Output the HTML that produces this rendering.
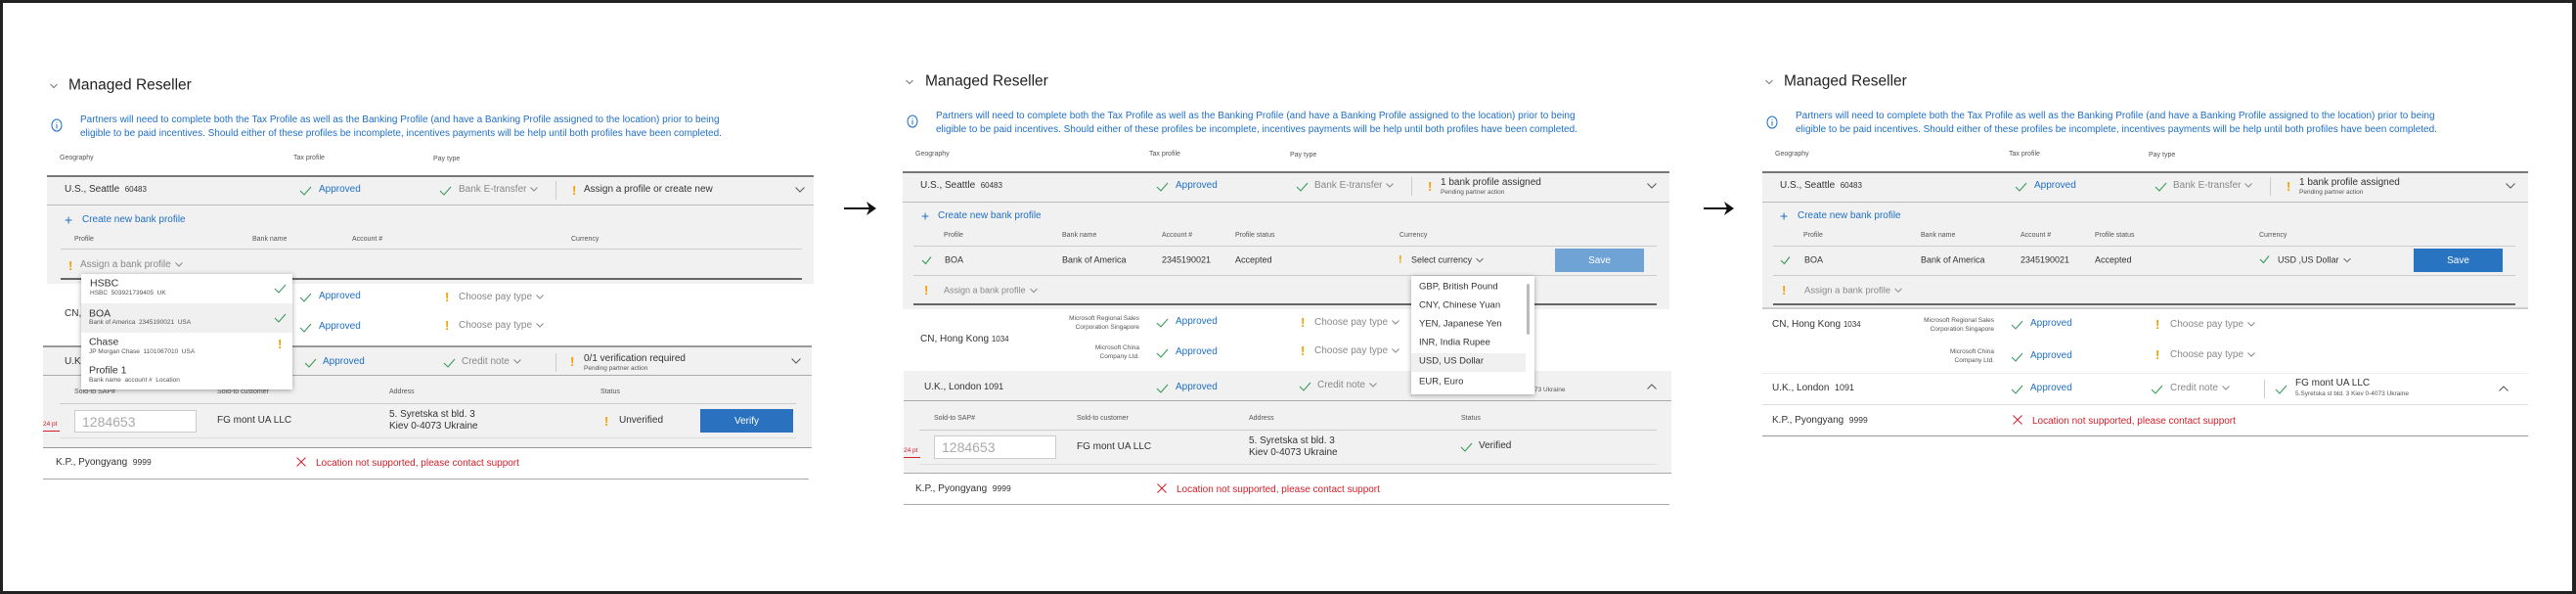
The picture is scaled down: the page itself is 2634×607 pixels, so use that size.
<!DOCTYPE html>
<html><head><meta charset="utf-8">
<style>
*{margin:0;padding:0;box-sizing:border-box}
html,body{width:2634px;height:607px;overflow:hidden;background:#fff}
body{position:relative;font-family:"Liberation Sans",Arial,sans-serif;color:#333}
.frame{position:absolute;left:0;top:0;width:2634px;height:607px;border:3px solid #222;border-right-width:4px}
.p{position:absolute;top:0;height:607px;width:880px}
.t{position:absolute;white-space:nowrap;transform:translateY(-50%);font-size:10px;line-height:1.2;color:#333}
.h{font-size:7px;color:#555}
.s{font-size:6.5px;color:#555}
.b{color:#1f6fc5}
.g{color:#888}
.r{color:#d0202a}
.o{color:#f5a000;font-size:13px;font-weight:bold}
.ti{font-size:15.5px;color:#222}
.info{position:absolute;font-size:10px;line-height:13.5px;color:#1f6fc5;white-space:nowrap}
.bg{position:absolute;background:#f1f1f1}
.ln{position:absolute;height:1px;background:#ccc}
.dk{position:absolute;height:2px;background:#666}
.sep{position:absolute;width:1px;background:#ccc}
.ck{position:absolute;transform:translateY(-50%)}
.cv{display:inline-block;margin-left:4px;vertical-align:middle}
.btn{position:absolute;color:#fff;font-size:10px;display:flex;align-items:center;justify-content:center}
.inp{position:absolute;background:#fff;border:1px solid #ccc;font-size:14px;color:#aaa;padding-left:7px;display:flex;align-items:center}
.dd{position:absolute;background:#fff;box-shadow:0 1px 5px rgba(0,0,0,.35)}
.arrow{position:absolute;height:2px;background:#111}
</style></head><body>
<div class="frame"></div>

<div class="arrow" style="left:863px;top:212px;width:28px"></div>
<svg style="position:absolute;left:886px;top:206px" width="10" height="14"><path d="M0 0L10 7L0 14L3 7Z" fill="#111"/></svg>
<div class="arrow" style="left:1742px;top:212px;width:26px"></div>
<svg style="position:absolute;left:1763px;top:206px" width="10" height="14"><path d="M0 0L10 7L0 14L3 7Z" fill="#111"/></svg>

<!-- ================= PANEL 1 ================= -->
<div class="p" style="left:0">
<svg class="ck" style="left:51px;top:88px" width="8" height="5"><path d="M0.5 0.5L4 4L7.5 0.5" fill="none" stroke="#777"/></svg>
<div class="t ti" style="left:70px;top:88px">Managed Reseller</div>
<svg class="ck" style="left:52px;top:128px" width="12" height="14"><ellipse cx="6" cy="7" rx="5" ry="6" fill="none" stroke="#1f6fc5"/><path d="M6 6v4.5M6 3.8v1" stroke="#1f6fc5"/></svg>
<div class="info" style="left:82px;top:116px">Partners will need to complete both the Tax Profile as well as the Banking Profile (and have a Banking Profile assigned to the location) prior to being<br>eligible to be paid incentives. Should either of these profiles be incomplete, incentives payments will be help until both profiles have been completed.</div>
<div class="t h" style="left:61px;top:162px">Geography</div>
<div class="t h" style="left:300px;top:162px">Tax profile</div>
<div class="t h" style="left:443px;top:163px">Pay type</div>

<div class="bg" style="left:48px;top:179px;width:784px;height:111px;border-top:2px solid #777"></div>
<div class="ln" style="left:48px;top:209px;width:784px;background:#bbb"></div>
<div class="t" style="left:66px;top:194px">U.S., Seattle &nbsp;<span style="font-size:8px">60483</span></div>
<svg class="ck" style="left:306px;top:195px" width="13" height="10"><path d="M1 5L5 9L12 1" fill="none" stroke="#3a9a5b" stroke-width="1.1"/></svg>
<div class="t b" style="left:326px;top:194px">Approved</div>
<svg class="ck" style="left:449px;top:195px" width="13" height="10"><path d="M1 5L5 9L12 1" fill="none" stroke="#3a9a5b" stroke-width="1.1"/></svg>
<div class="t g" style="left:469px;top:194px">Bank E-transfer<svg class="cv" width="8" height="5"><path d="M0.5 0.5L4 4L7.5 0.5" fill="none" stroke="#888"/></svg></div>
<div class="sep" style="left:568px;top:185px;height:19px"></div>
<div class="t o" style="left:585px;top:195px">!</div>
<div class="t" style="left:597px;top:194px">Assign a profile or create new</div>
<svg class="ck" style="left:813px;top:194px" width="10" height="6"><path d="M0.5 0.5L5 5L9.5 0.5" fill="none" stroke="#555"/></svg>

<div class="t b" style="left:66px;top:225px;font-size:14px">+</div>
<div class="t b" style="left:84px;top:225px">Create new bank profile</div>
<div class="t h" style="left:76px;top:245px">Profile</div>
<div class="t h" style="left:258px;top:245px">Bank name</div>
<div class="t h" style="left:360px;top:245px">Account #</div>
<div class="t h" style="left:584px;top:245px">Currency</div>
<div class="ln" style="left:62px;top:254px;width:758px"></div>
<div class="t o" style="left:70px;top:272px">!</div>
<div class="t g" style="left:82px;top:271px">Assign a bank profile<svg class="cv" width="8" height="5"><path d="M0.5 0.5L4 4L7.5 0.5" fill="none" stroke="#888"/></svg></div>
<div class="dk" style="left:62px;top:284px;width:758px"></div>

<div class="t" style="left:66px;top:321px">CN,</div>
<svg class="ck" style="left:306px;top:304px" width="13" height="10"><path d="M1 5L5 9L12 1" fill="none" stroke="#3a9a5b" stroke-width="1.1"/></svg>
<div class="t b" style="left:326px;top:303px">Approved</div>
<svg class="ck" style="left:306px;top:335px" width="13" height="10"><path d="M1 5L5 9L12 1" fill="none" stroke="#3a9a5b" stroke-width="1.1"/></svg>
<div class="t b" style="left:326px;top:334px">Approved</div>
<div class="t o" style="left:455px;top:304px">!</div>
<div class="t g" style="left:469px;top:304px">Choose pay type<svg class="cv" width="8" height="5"><path d="M0.5 0.5L4 4L7.5 0.5" fill="none" stroke="#888"/></svg></div>
<div class="t o" style="left:455px;top:333px">!</div>
<div class="t g" style="left:469px;top:333px">Choose pay type<svg class="cv" width="8" height="5"><path d="M0.5 0.5L4 4L7.5 0.5" fill="none" stroke="#888"/></svg></div>

<div class="bg" style="left:44px;top:353px;width:786px;height:105px;border-top:2px solid #999;border-bottom:1px solid #999"></div>
<div class="ln" style="left:44px;top:383px;width:786px;background:#aaa"></div>
<div class="t" style="left:66px;top:370px">U.K.</div>
<svg class="ck" style="left:311px;top:371px" width="13" height="10"><path d="M1 5L5 9L12 1" fill="none" stroke="#3a9a5b" stroke-width="1.1"/></svg>
<div class="t b" style="left:330px;top:370px">Approved</div>
<svg class="ck" style="left:453px;top:371px" width="13" height="10"><path d="M1 5L5 9L12 1" fill="none" stroke="#3a9a5b" stroke-width="1.1"/></svg>
<div class="t g" style="left:472px;top:370px">Credit note<svg class="cv" width="8" height="5"><path d="M0.5 0.5L4 4L7.5 0.5" fill="none" stroke="#888"/></svg></div>
<div class="sep" style="left:568px;top:361px;height:19px"></div>
<div class="t o" style="left:583px;top:370px">!</div>
<div class="t" style="left:597px;top:367px">0/1 verification required</div>
<div class="t s" style="left:597px;top:377px">Pending partner action</div>
<svg class="ck" style="left:809px;top:369px" width="10" height="6"><path d="M0.5 0.5L5 5L9.5 0.5" fill="none" stroke="#555"/></svg>
<div class="t h" style="left:76px;top:401px">Sold-to SAP#</div>
<div class="t h" style="left:222px;top:401px">Sold-to customer</div>
<div class="t h" style="left:398px;top:401px">Address</div>
<div class="t h" style="left:614px;top:401px">Status</div>
<div class="ln" style="left:61px;top:412px;width:753px"></div>
<div class="inp" style="left:76px;top:419px;width:125px;height:23px">1284653</div>
<div class="t" style="left:222px;top:430px">FG mont UA LLC</div>
<div class="t" style="left:398px;top:424px">5. Syretska st bld. 3</div>
<div class="t" style="left:398px;top:436px">Kiev 0-4073 Ukraine</div>
<div class="t o" style="left:618px;top:431px">!</div>
<div class="t" style="left:633px;top:430px">Unverified</div>
<div class="btn" style="left:716px;top:418px;width:95px;height:24px;background:#2a72c0">Verify</div>
<div class="ln" style="left:61px;top:447px;width:753px;background:#ddd"></div>
<div class="t r" style="left:44px;top:434px;font-size:6.5px">24 pt</div>
<div class="ln" style="left:44px;top:440px;width:17px;background:#d0202a"></div>

<div class="t" style="left:57px;top:473px">K.P., Pyongyang &nbsp;<span style="font-size:8.5px">9999</span></div>
<svg class="ck" style="left:303px;top:472px" width="10" height="10"><path d="M0.5 0.5L9.5 9.5M9.5 0.5L0.5 9.5" stroke="#d0202a"/></svg>
<div class="t r" style="left:323px;top:474px">Location not supported, please contact support</div>
<div class="ln" style="left:44px;top:489px;width:783px;background:#aaa"></div>

<div class="dd" style="left:83px;top:280px;width:216px;height:118px">
 <div style="position:absolute;left:0;top:30px;width:216px;height:30px;background:#f0f0f0"></div>
</div>
<div class="t" style="left:92px;top:290px;font-size:10.5px">HSBC</div>
<div class="t s" style="left:92px;top:300px">HSBC &nbsp;503921739405 &nbsp;UK</div>
<svg class="ck" style="left:280px;top:295px" width="13" height="10"><path d="M1 5L5 9L12 1" fill="none" stroke="#3a9a5b" stroke-width="1.1"/></svg>
<div class="t" style="left:91px;top:321px;font-size:10.5px">BOA</div>
<div class="t s" style="left:91px;top:330px">Bank of America &nbsp;2345190021 &nbsp;USA</div>
<svg class="ck" style="left:280px;top:325px" width="13" height="10"><path d="M1 5L5 9L12 1" fill="none" stroke="#3a9a5b" stroke-width="1.1"/></svg>
<div class="t" style="left:91px;top:350px;font-size:10.5px">Chase</div>
<div class="t s" style="left:91px;top:360px">JP Morgan Chase &nbsp;1101067010 &nbsp;USA</div>
<div class="t o" style="left:284px;top:352px">!</div>
<div class="t" style="left:91px;top:379px;font-size:10.5px">Profile 1</div>
<div class="t s" style="left:91px;top:389px">Bank name &nbsp;account # &nbsp;Location</div>
</div>

<!-- ================= PANEL 2 ================= -->
<div class="p" style="left:880px">
<svg class="ck" style="left:46px;top:84px" width="8" height="5"><path d="M0.5 0.5L4 4L7.5 0.5" fill="none" stroke="#777"/></svg>
<div class="t ti" style="left:66px;top:84px">Managed Reseller</div>
<svg class="ck" style="left:47px;top:124px" width="12" height="14"><ellipse cx="6" cy="7" rx="5" ry="6" fill="none" stroke="#1f6fc5"/><path d="M6 6v4.5M6 3.8v1" stroke="#1f6fc5"/></svg>
<div class="info" style="left:77px;top:112px">Partners will need to complete both the Tax Profile as well as the Banking Profile (and have a Banking Profile assigned to the location) prior to being<br>eligible to be paid incentives. Should either of these profiles be incomplete, incentives payments will be help until both profiles have been completed.</div>
<div class="t h" style="left:56px;top:158px">Geography</div>
<div class="t h" style="left:295px;top:158px">Tax profile</div>
<div class="t h" style="left:439px;top:159px">Pay type</div>

<div class="bg" style="left:43px;top:175px;width:784px;height:141px;border-top:2px solid #777"></div>
<div class="ln" style="left:43px;top:206px;width:784px;background:#bbb"></div>
<div class="t" style="left:61px;top:190px">U.S., Seattle &nbsp;<span style="font-size:8px">60483</span></div>
<svg class="ck" style="left:302px;top:191px" width="13" height="10"><path d="M1 5L5 9L12 1" fill="none" stroke="#3a9a5b" stroke-width="1.1"/></svg>
<div class="t b" style="left:322px;top:190px">Approved</div>
<svg class="ck" style="left:445px;top:191px" width="13" height="10"><path d="M1 5L5 9L12 1" fill="none" stroke="#3a9a5b" stroke-width="1.1"/></svg>
<div class="t g" style="left:464px;top:190px">Bank E-transfer<svg class="cv" width="8" height="5"><path d="M0.5 0.5L4 4L7.5 0.5" fill="none" stroke="#888"/></svg></div>
<div class="sep" style="left:563px;top:181px;height:19px"></div>
<div class="t o" style="left:580px;top:191px">!</div>
<div class="t" style="left:593px;top:187px">1 bank profile assigned</div>
<div class="t s" style="left:593px;top:197px">Pending partner action</div>
<svg class="ck" style="left:804px;top:190px" width="10" height="6"><path d="M0.5 0.5L5 5L9.5 0.5" fill="none" stroke="#555"/></svg>

<div class="t b" style="left:62px;top:221px;font-size:14px">+</div>
<div class="t b" style="left:79px;top:221px">Create new bank profile</div>
<div class="t h" style="left:85px;top:241px">Profile</div>
<div class="t h" style="left:206px;top:241px">Bank name</div>
<div class="t h" style="left:308px;top:241px">Account #</div>
<div class="t h" style="left:383px;top:241px">Profile status</div>
<div class="t h" style="left:551px;top:241px">Currency</div>
<div class="ln" style="left:54px;top:251px;width:760px"></div>
<svg class="ck" style="left:62px;top:266px" width="11" height="9"><path d="M1 4.5L4.5 8L10 1" fill="none" stroke="#3a9a5b" stroke-width="1.1"/></svg>
<div class="t" style="left:86px;top:266px;font-size:9px">BOA</div>
<div class="t" style="left:206px;top:266px;font-size:9px">Bank of America</div>
<div class="t" style="left:308px;top:266px;font-size:9px">2345190021</div>
<div class="t" style="left:383px;top:266px;font-size:9px">Accepted</div>
<div class="t o" style="left:550px;top:266px;font-size:11px">!</div>
<div class="t" style="left:563px;top:266px;font-size:9px">Select currency<svg class="cv" width="8" height="5"><path d="M0.5 0.5L4 4L7.5 0.5" fill="none" stroke="#666"/></svg></div>
<div class="btn" style="left:710px;top:254px;width:91px;height:24px;background:#6fa3d6">Save</div>
<div class="ln" style="left:54px;top:281px;width:760px"></div>
<div class="t o" style="left:65px;top:297px">!</div>
<div class="t g" style="left:85px;top:297px;font-size:9px">Assign a bank profile<svg class="cv" width="8" height="5"><path d="M0.5 0.5L4 4L7.5 0.5" fill="none" stroke="#888"/></svg></div>
<div class="dk" style="left:54px;top:310px;width:760px"></div>

<div class="t" style="left:61px;top:347px">CN, Hong Kong <span style="font-size:8px">1034</span></div>
<div class="t s" style="left:185px;top:330px;width:100px;text-align:right;line-height:9px">Microsoft Regional Sales<br>Corporation Singapore</div>
<div class="t s" style="left:185px;top:360px;width:100px;text-align:right;line-height:9px">Microsoft China<br>Company Ltd.</div>
<svg class="ck" style="left:302px;top:330px" width="13" height="10"><path d="M1 5L5 9L12 1" fill="none" stroke="#3a9a5b" stroke-width="1.1"/></svg>
<div class="t b" style="left:322px;top:329px">Approved</div>
<svg class="ck" style="left:302px;top:361px" width="13" height="10"><path d="M1 5L5 9L12 1" fill="none" stroke="#3a9a5b" stroke-width="1.1"/></svg>
<div class="t b" style="left:322px;top:360px">Approved</div>
<div class="t o" style="left:450px;top:330px">!</div>
<div class="t g" style="left:464px;top:330px">Choose pay type<svg class="cv" width="8" height="5"><path d="M0.5 0.5L4 4L7.5 0.5" fill="none" stroke="#888"/></svg></div>
<div class="t o" style="left:450px;top:359px">!</div>
<div class="t g" style="left:464px;top:359px">Choose pay type<svg class="cv" width="8" height="5"><path d="M0.5 0.5L4 4L7.5 0.5" fill="none" stroke="#888"/></svg></div>

<div class="bg" style="left:44px;top:379px;width:785px;height:105px;border-bottom:1px solid #aaa"></div>
<div class="ln" style="left:44px;top:409px;width:785px;background:#aaa"></div>
<div class="t" style="left:65px;top:396px">U.K., London <span style="font-size:9px">1091</span></div>
<svg class="ck" style="left:302px;top:397px" width="13" height="10"><path d="M1 5L5 9L12 1" fill="none" stroke="#3a9a5b" stroke-width="1.1"/></svg>
<div class="t b" style="left:322px;top:396px">Approved</div>
<svg class="ck" style="left:448px;top:395px" width="13" height="10"><path d="M1 5L5 9L12 1" fill="none" stroke="#3a9a5b" stroke-width="1.1"/></svg>
<div class="t g" style="left:467px;top:394px">Credit note<svg class="cv" width="8" height="5"><path d="M0.5 0.5L4 4L7.5 0.5" fill="none" stroke="#888"/></svg></div>
<div class="sep" style="left:563px;top:386px;height:19px"></div>
<div class="t s" style="left:689px;top:399px">73 Ukraine</div>
<svg class="ck" style="left:804px;top:395px" width="10" height="6"><path d="M0.5 5.5L5 1L9.5 5.5" fill="none" stroke="#555"/></svg>
<div class="t h" style="left:75px;top:428px">Sold-to SAP#</div>
<div class="t h" style="left:221px;top:428px">Sold-to customer</div>
<div class="t h" style="left:397px;top:428px">Address</div>
<div class="t h" style="left:614px;top:428px">Status</div>
<div class="ln" style="left:60px;top:439px;width:754px"></div>
<div class="inp" style="left:75px;top:445px;width:125px;height:24px">1284653</div>
<div class="t" style="left:221px;top:457px">FG mont UA LLC</div>
<div class="t" style="left:397px;top:451px">5. Syretska st bld. 3</div>
<div class="t" style="left:397px;top:463px">Kiev 0-4073 Ukraine</div>
<svg class="ck" style="left:613px;top:457px" width="13" height="10"><path d="M1 5L5 9L12 1" fill="none" stroke="#3a9a5b" stroke-width="1.1"/></svg>
<div class="t" style="left:632px;top:456px">Verified</div>
<div class="ln" style="left:60px;top:474px;width:754px;background:#ddd"></div>
<div class="t r" style="left:44px;top:461px;font-size:6.5px">24 pt</div>
<div class="ln" style="left:44px;top:467px;width:17px;background:#d0202a"></div>

<div class="t" style="left:56px;top:500px">K.P., Pyongyang &nbsp;<span style="font-size:8.5px">9999</span></div>
<svg class="ck" style="left:303px;top:499px" width="10" height="10"><path d="M0.5 0.5L9.5 9.5M9.5 0.5L0.5 9.5" stroke="#d0202a"/></svg>
<div class="t r" style="left:323px;top:501px">Location not supported, please contact support</div>
<div class="ln" style="left:44px;top:515px;width:783px;background:#aaa"></div>

<div class="dd" style="left:563px;top:282px;width:126px;height:121px">
 <div style="position:absolute;left:0;top:79px;width:117px;height:19px;background:#f0f0f0"></div>
 <div style="position:absolute;left:118px;top:8px;width:3px;height:52px;background:#bbb;border-radius:2px"></div>
</div>
<div class="t" style="left:571px;top:293px;font-size:9.5px">GBP, British Pound</div>
<div class="t" style="left:571px;top:312px;font-size:9.5px">CNY, Chinese Yuan</div>
<div class="t" style="left:571px;top:331px;font-size:9.5px">YEN, Japanese Yen</div>
<div class="t" style="left:571px;top:350px;font-size:9.5px">INR, India Rupee</div>
<div class="t" style="left:571px;top:369px;font-size:9.5px">USD, US Dollar</div>
<div class="t" style="left:571px;top:390px;font-size:9.5px">EUR, Euro</div>
</div>

<!-- ================= PANEL 3 ================= -->
<div class="p" style="left:1754px">
<svg class="ck" style="left:51px;top:84px" width="8" height="5"><path d="M0.5 0.5L4 4L7.5 0.5" fill="none" stroke="#777"/></svg>
<div class="t ti" style="left:70px;top:84px">Managed Reseller</div>
<svg class="ck" style="left:52px;top:125px" width="12" height="14"><ellipse cx="6" cy="7" rx="5" ry="6" fill="none" stroke="#1f6fc5"/><path d="M6 6v4.5M6 3.8v1" stroke="#1f6fc5"/></svg>
<div class="info" style="left:82px;top:112px">Partners will need to complete both the Tax Profile as well as the Banking Profile (and have a Banking Profile assigned to the location) prior to being<br>eligible to be paid incentives. Should either of these profiles be incomplete, incentives payments will be help until both profiles have been completed.</div>
<div class="t h" style="left:61px;top:158px">Geography</div>
<div class="t h" style="left:300px;top:158px">Tax profile</div>
<div class="t h" style="left:443px;top:159px">Pay type</div>

<div class="bg" style="left:48px;top:175px;width:783px;height:141px;border-top:2px solid #777;border-bottom:2px solid #ccc"></div>
<div class="ln" style="left:48px;top:206px;width:783px;background:#bbb"></div>
<div class="t" style="left:66px;top:190px">U.S., Seattle &nbsp;<span style="font-size:8px">60483</span></div>
<svg class="ck" style="left:306px;top:191px" width="13" height="10"><path d="M1 5L5 9L12 1" fill="none" stroke="#3a9a5b" stroke-width="1.1"/></svg>
<div class="t b" style="left:326px;top:190px">Approved</div>
<svg class="ck" style="left:449px;top:191px" width="13" height="10"><path d="M1 5L5 9L12 1" fill="none" stroke="#3a9a5b" stroke-width="1.1"/></svg>
<div class="t g" style="left:468px;top:190px">Bank E-transfer<svg class="cv" width="8" height="5"><path d="M0.5 0.5L4 4L7.5 0.5" fill="none" stroke="#888"/></svg></div>
<div class="sep" style="left:567px;top:181px;height:19px"></div>
<div class="t o" style="left:584px;top:191px">!</div>
<div class="t" style="left:597px;top:187px">1 bank profile assigned</div>
<div class="t s" style="left:597px;top:197px">Pending partner action</div>
<svg class="ck" style="left:808px;top:190px" width="10" height="6"><path d="M0.5 0.5L5 5L9.5 0.5" fill="none" stroke="#555"/></svg>

<div class="t b" style="left:66px;top:221px;font-size:14px">+</div>
<div class="t b" style="left:84px;top:221px">Create new bank profile</div>
<div class="t h" style="left:90px;top:241px">Profile</div>
<div class="t h" style="left:210px;top:241px">Bank name</div>
<div class="t h" style="left:312px;top:241px">Account #</div>
<div class="t h" style="left:388px;top:241px">Profile status</div>
<div class="t h" style="left:556px;top:241px">Currency</div>
<div class="ln" style="left:59px;top:251px;width:759px"></div>
<svg class="ck" style="left:66px;top:266px" width="11" height="9"><path d="M1 4.5L4.5 8L10 1" fill="none" stroke="#3a9a5b" stroke-width="1.1"/></svg>
<div class="t" style="left:91px;top:266px;font-size:9px">BOA</div>
<div class="t" style="left:210px;top:266px;font-size:9px">Bank of America</div>
<div class="t" style="left:312px;top:266px;font-size:9px">2345190021</div>
<div class="t" style="left:388px;top:266px;font-size:9px">Accepted</div>
<svg class="ck" style="left:556px;top:265px" width="11" height="9"><path d="M1 4.5L4.5 8L10 1" fill="none" stroke="#3a9a5b" stroke-width="1.1"/></svg>
<div class="t" style="left:575px;top:266px;font-size:9px">USD ,US Dollar<svg class="cv" width="8" height="5"><path d="M0.5 0.5L4 4L7.5 0.5" fill="none" stroke="#666"/></svg></div>
<div class="btn" style="left:714px;top:254px;width:91px;height:24px;background:#2874c0">Save</div>
<div class="ln" style="left:59px;top:281px;width:759px"></div>
<div class="t o" style="left:68px;top:297px">!</div>
<div class="t g" style="left:91px;top:297px;font-size:9.5px">Assign a bank profile<svg class="cv" width="8" height="5"><path d="M0.5 0.5L4 4L7.5 0.5" fill="none" stroke="#888"/></svg></div>
<div class="dk" style="left:59px;top:310px;width:759px"></div>

<div class="t" style="left:58px;top:332px">CN, Hong Kong <span style="font-size:8px">1034</span></div>
<div class="t s" style="left:185px;top:332px;width:100px;text-align:right;line-height:9px">Microsoft Regional Sales<br>Corporation Singapore</div>
<div class="t s" style="left:185px;top:364px;width:100px;text-align:right;line-height:9px">Microsoft China<br>Company Ltd.</div>
<svg class="ck" style="left:302px;top:332px" width="13" height="10"><path d="M1 5L5 9L12 1" fill="none" stroke="#3a9a5b" stroke-width="1.1"/></svg>
<div class="t b" style="left:322px;top:331px">Approved</div>
<svg class="ck" style="left:302px;top:365px" width="13" height="10"><path d="M1 5L5 9L12 1" fill="none" stroke="#3a9a5b" stroke-width="1.1"/></svg>
<div class="t b" style="left:322px;top:364px">Approved</div>
<div class="t o" style="left:450px;top:332px">!</div>
<div class="t g" style="left:465px;top:332px">Choose pay type<svg class="cv" width="8" height="5"><path d="M0.5 0.5L4 4L7.5 0.5" fill="none" stroke="#888"/></svg></div>
<div class="t o" style="left:450px;top:363px">!</div>
<div class="t g" style="left:465px;top:363px">Choose pay type<svg class="cv" width="8" height="5"><path d="M0.5 0.5L4 4L7.5 0.5" fill="none" stroke="#888"/></svg></div>

<div class="ln" style="left:48px;top:381px;width:783px;background:#eee"></div>
<div class="t" style="left:58px;top:397px">U.K., London &nbsp;<span style="font-size:9px">1091</span></div>
<svg class="ck" style="left:302px;top:398px" width="13" height="10"><path d="M1 5L5 9L12 1" fill="none" stroke="#3a9a5b" stroke-width="1.1"/></svg>
<div class="t b" style="left:322px;top:397px">Approved</div>
<svg class="ck" style="left:445px;top:398px" width="13" height="10"><path d="M1 5L5 9L12 1" fill="none" stroke="#3a9a5b" stroke-width="1.1"/></svg>
<div class="t g" style="left:465px;top:397px">Credit note<svg class="cv" width="8" height="5"><path d="M0.5 0.5L4 4L7.5 0.5" fill="none" stroke="#888"/></svg></div>
<div class="sep" style="left:561px;top:388px;height:19px"></div>
<svg class="ck" style="left:572px;top:398px" width="13" height="10"><path d="M1 5L5 9L12 1" fill="none" stroke="#3a9a5b" stroke-width="1.1"/></svg>
<div class="t" style="left:593px;top:392px">FG mont UA LLC</div>
<div class="t s" style="left:593px;top:403px">5.Syretska st bld. 3 Kiev 0-4073 Ukraine</div>
<svg class="ck" style="left:801px;top:397px" width="10" height="6"><path d="M0.5 5.5L5 1L9.5 5.5" fill="none" stroke="#555"/></svg>
<div class="ln" style="left:48px;top:413px;width:783px;background:#ddd"></div>

<div class="t" style="left:58px;top:430px">K.P., Pyongyang &nbsp;<span style="font-size:8.5px">9999</span></div>
<svg class="ck" style="left:304px;top:429px" width="10" height="10"><path d="M0.5 0.5L9.5 9.5M9.5 0.5L0.5 9.5" stroke="#d0202a"/></svg>
<div class="t r" style="left:324px;top:431px">Location not supported, please contact support</div>
<div class="ln" style="left:48px;top:445px;width:783px;background:#999"></div>
</div>
</body></html>
